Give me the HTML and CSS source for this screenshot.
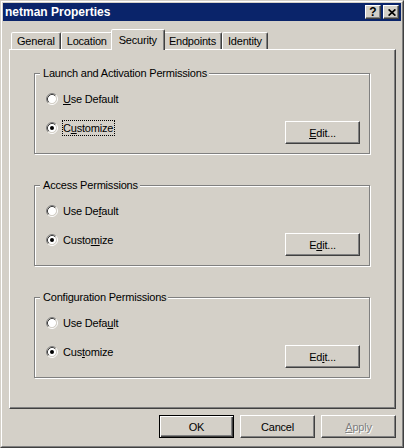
FILE: index.html
```html
<!DOCTYPE html>
<html>
<head>
<meta charset="utf-8">
<title>netman Properties</title>
<link rel="stylesheet" href="styles.css">
</head>
<body>
<svg class="defs" width="0" height="0" aria-hidden="true">
  <defs>
    <symbol id="radio" viewBox="0 0 12 12">
      <circle cx="6" cy="6" r="4.2" fill="#fff"/>
      <path d="M2.11 9.89 A5.5 5.5 0 0 1 9.89 2.11" fill="none" stroke="#808080"/>
      <path d="M9.89 2.11 A5.5 5.5 0 0 1 2.11 9.89" fill="none" stroke="#fff"/>
      <path d="M2.82 9.18 A4.5 4.5 0 0 1 9.18 2.82" fill="none" stroke="#404040"/>
      <path d="M9.18 2.82 A4.5 4.5 0 0 1 2.82 9.18" fill="none" stroke="#d4d0c8"/>
    </symbol>
    <symbol id="radio-on" viewBox="0 0 12 12">
      <use href="#radio"/>
      <circle cx="6" cy="6" r="2" fill="#000"/>
    </symbol>
  </defs>
</svg>
<div class="window">
  <div class="frame">
    <div class="titlebar">
      <span class="title">netman Properties</span>
      <div class="caption-buttons">
        <span class="cap-btn help">?</span>
        <span class="cap-btn close">
          <svg width="8" height="7" viewBox="0 0 8 7"><path d="M0.6 0.4 L7.4 6.6 M7.4 0.4 L0.6 6.6" stroke="#000" stroke-width="1.7" fill="none"/></svg>
        </span>
      </div>
    </div>

    <div class="tabs">
      <div class="tab">General</div>
      <div class="tab">Location</div>
      <div class="tab active">Security</div>
      <div class="tab">Endpoints</div>
      <div class="tab">Identity</div>
    </div>

    <div class="panel">
      <fieldset class="group">
        <legend>Launch and Activation Permissions</legend>
        <div class="row">
          <div class="option"><svg class="radio" width="12" height="12"><use href="#radio"/></svg><span class="label"><u>U</u>se Default</span></div>
        </div>
        <div class="row row-custom">
          <div class="option"><svg class="radio" width="12" height="12"><use href="#radio-on"/></svg><span class="label focus">C<u>u</u>stomize</span></div>
          <button class="btn edit"><u>E</u>dit...</button>
        </div>
      </fieldset>

      <fieldset class="group">
        <legend>Access Permissions</legend>
        <div class="row">
          <div class="option"><svg class="radio" width="12" height="12"><use href="#radio"/></svg><span class="label">Use De<u>f</u>ault</span></div>
        </div>
        <div class="row row-custom">
          <div class="option"><svg class="radio" width="12" height="12"><use href="#radio-on"/></svg><span class="label">Custo<u>m</u>ize</span></div>
          <button class="btn edit">E<u>d</u>it...</button>
        </div>
      </fieldset>

      <fieldset class="group">
        <legend>Configuration Permissions</legend>
        <div class="row">
          <div class="option"><svg class="radio" width="12" height="12"><use href="#radio"/></svg><span class="label">Use Defa<u>u</u>lt</span></div>
        </div>
        <div class="row row-custom">
          <div class="option"><svg class="radio" width="12" height="12"><use href="#radio-on"/></svg><span class="label">Cus<u>t</u>omize</span></div>
          <button class="btn edit">Ed<u>i</u>t...</button>
        </div>
      </fieldset>
    </div>

    <div class="footer">
      <button class="btn default">OK</button>
      <button class="btn">Cancel</button>
      <button class="btn disabled"><u>A</u>pply</button>
    </div>
  </div>
</div>
</body>
</html>
```

FILE: styles.css
```css
* { box-sizing: border-box; }

html, body {
  margin: 0;
  padding: 0;
}

body {
  width: 404px;
  height: 448px;
  overflow: hidden;
  background: #d4d0c8;
  color: #000;
  font-family: "Liberation Sans", Arial, sans-serif;
  font-size: 11px;
  letter-spacing: -0.2px;
}

.defs {
  position: absolute;
  width: 0;
  height: 0;
}

.window {
  width: 404px;
  height: 448px;
  background: #d4d0c8;
  border: 1px solid;
  border-color: #d4d0c8 #404040 #404040 #d4d0c8;
}

.frame {
  height: 100%;
  padding: 1px;
  border: 1px solid;
  border-color: #fff #808080 #808080 #fff;
  display: flex;
  flex-direction: column;
}

/* Title bar */
.titlebar {
  height: 18px;
  flex: none;
  background: #0a246a;
  display: flex;
  align-items: center;
  justify-content: space-between;
  padding: 0 2px 0 2px;
}

.title {
  color: #fff;
  font-weight: bold;
  font-size: 12px;
  letter-spacing: 0;
  line-height: 18px;
}

.caption-buttons {
  display: flex;
  gap: 2px;
}

.cap-btn {
  width: 16px;
  height: 14px;
  background: #d4d0c8;
  border: 1px solid;
  border-color: #fff #404040 #404040 #fff;
  box-shadow: inset -1px -1px 0 #808080;
  display: flex;
  align-items: center;
  justify-content: center;
  font-weight: bold;
  font-size: 12px;
  letter-spacing: 0;
  line-height: 12px;
}

.cap-btn svg {
  display: block;
  margin-left: 1px;
}

/* Tabs */
.tabs {
  flex: none;
  height: 20px;
  margin-top: 8px;
  padding-left: 8px;
  display: flex;
  align-items: flex-end;
}

.tab {
  height: 17px;
  padding: 1px 5px 0 5px;
  line-height: 14px;
  background: #d4d0c8;
  border: 1px solid;
  border-bottom: 0;
  border-color: #fff #404040 transparent #fff;
  border-radius: 2px 2px 0 0;
  box-shadow: inset -1px 0 0 #808080;
  white-space: nowrap;
}

.tab.active {
  position: relative;
  z-index: 1;
  height: 21px;
  margin: 0 -2px -1px -2px;
  padding: 3px 7px 0 7px;
}

/* Tab page */
.panel {
  flex: none;
  height: 360px;
  margin: 0 5px 0 6px;
  padding: 17px 25px 0 24px;
  border: 1px solid;
  border-color: #fff #404040 #404040 #fff;
  box-shadow: inset -1px -1px 0 #808080;
  display: flex;
  flex-direction: column;
}

.group {
  margin: 0;
  min-width: 0;
  padding: 11px 9px 9px 11px;
  border: 1px solid #808080;
  box-shadow: 1px 1px 0 #fff, inset 1px 1px 0 #fff;
}

.group + .group {
  margin-top: 25px;
}

.group legend {
  margin-left: -6px;
  padding: 0 2px 0 3px;
  line-height: 13px;
  background: #d4d0c8;
}

.row {
  display: flex;
  align-items: center;
  height: 16px;
}

.row-custom {
  margin-top: 13px;
  height: 24px;
  align-items: flex-start;
}

.option {
  display: flex;
  align-items: center;
  height: 16px;
}

.radio {
  display: block;
  flex: none;
}

.label {
  margin-left: 4px;
  padding: 0 1px 0 0;
  line-height: 14px;
  border: 1px solid transparent;
}

.label.focus {
  border: 1px dotted #000;
}

u {
  text-decoration: underline;
  text-underline-offset: 1px;
}

/* Buttons */
.btn {
  width: 75px;
  height: 23px;
  padding: 0;
  margin: 0;
  font: inherit;
  letter-spacing: inherit;
  color: #000;
  background: #d4d0c8;
  border: 1px solid;
  border-color: #fff #404040 #404040 #fff;
  box-shadow: inset -1px -1px 0 #808080;
  border-radius: 0;
}

.edit {
  margin-left: auto;
  margin-top: 1px;
}

.btn.default {
  border-color: #000;
  box-shadow: inset 1px 1px 0 #fff, inset -1px -1px 0 #404040, inset -2px -2px 0 #808080;
}

.btn.disabled {
  color: #808080;
  text-shadow: 1px 1px 0 #fff;
}

.footer {
  flex: none;
  display: flex;
  justify-content: flex-end;
  gap: 6px;
  padding: 6px 5px 0 0;
}
```
